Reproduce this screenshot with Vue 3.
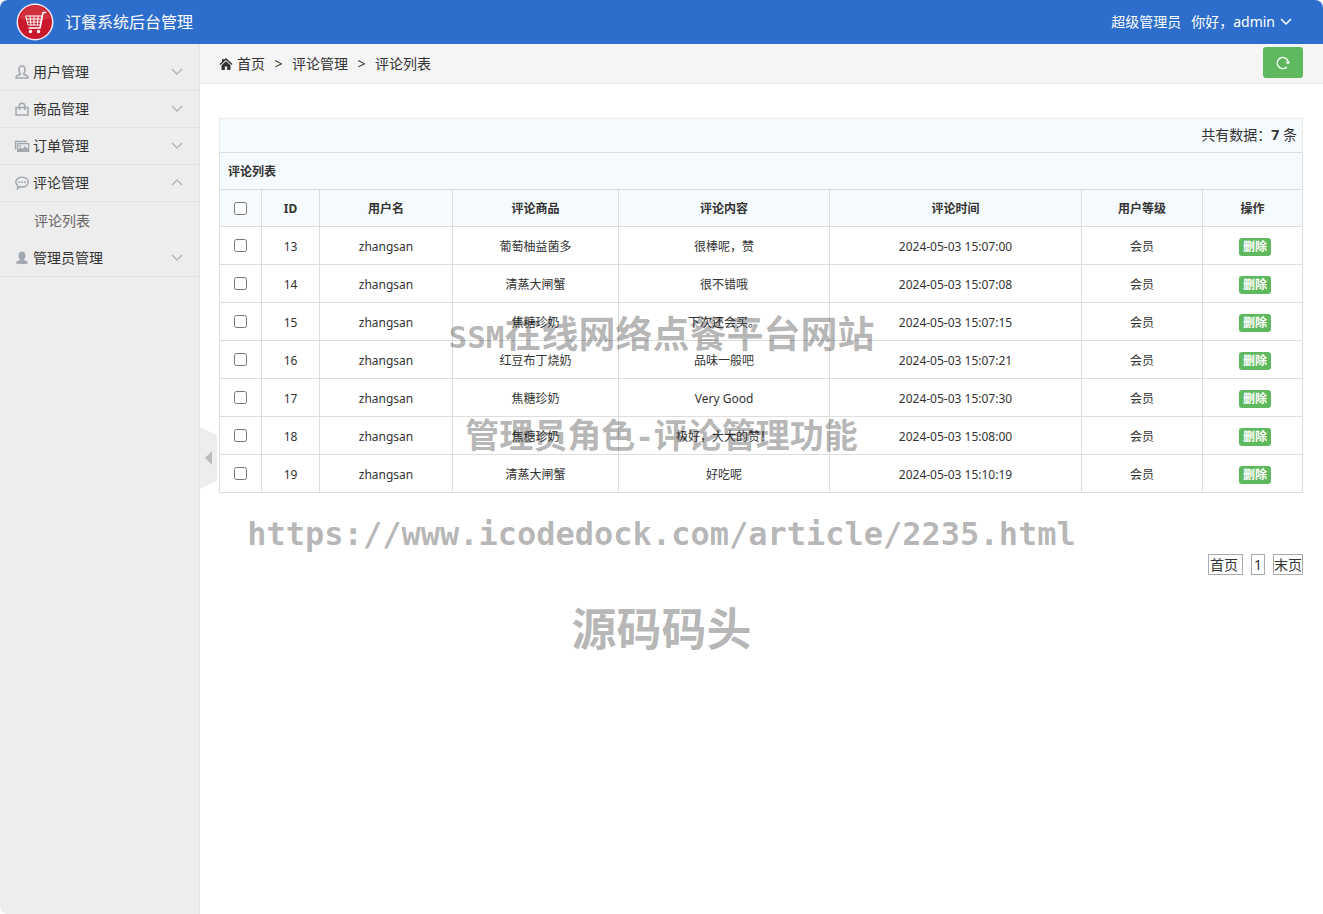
<script setup>
import { ref, computed } from 'vue'

const menu = [
  { label: '用户管理', icon: 'user' },
  { label: '商品管理', icon: 'bag' },
  { label: '订单管理', icon: 'picture' },
  { label: '评论管理', icon: 'chat', open: true, children: ['评论列表'] },
  { label: '管理员管理', icon: 'admin' },
]

const widths = [42, 58, 133, 166, 211, 252, 121, 100]
const headings = ['ID', '用户名', '评论商品', '评论内容', '评论时间', '用户等级', '操作']

const comments = [
  { id: 13, user: 'zhangsan', product: '葡萄柚益菌多', text: '很棒呢，赞', time: '2024-05-03 15:07:00' },
  { id: 14, user: 'zhangsan', product: '清蒸大闸蟹', text: '很不错哦', time: '2024-05-03 15:07:08' },
  { id: 15, user: 'zhangsan', product: '焦糖珍奶', text: '下次还会买。', time: '2024-05-03 15:07:15' },
  { id: 16, user: 'zhangsan', product: '红豆布丁烧奶', text: '品味一般吧', time: '2024-05-03 15:07:21' },
  { id: 17, user: 'zhangsan', product: '焦糖珍奶', text: 'Very Good', time: '2024-05-03 15:07:30' },
  { id: 18, user: 'zhangsan', product: '焦糖珍奶', text: '极好，大大的赞！', time: '2024-05-03 15:08:00' },
  { id: 19, user: 'zhangsan', product: '清蒸大闸蟹', text: '好吃呢', time: '2024-05-03 15:10:19' },
]

const selected = ref([])
const allSelected = computed({
  get: () => selected.value.length === comments.length,
  set: (on) => { selected.value = on ? comments.map((c) => c.id) : [] },
})
</script>

<template>
  <div class="page">
    <header class="topbar">
      <svg class="logo" viewBox="0 0 38 38" aria-hidden="true">
        <circle cx="19" cy="19" r="18.5" fill="#f3e9f0" />
        <circle cx="19" cy="19" r="17" fill="#c9182b" />
        <path d="M3.5 15a16 16 0 0 1 31 0Q19 22 3.5 15Z" fill="#d9404c" opacity=".6" />
        <g fill="none" stroke="#fff" stroke-linecap="round" stroke-linejoin="round">
          <path d="M29.500 9.500h-2.500l-3 15.500H13" stroke-width="1.500" />
          <path d="M10 13h16l-1.500 9H12.500zM10.500 16h15M11.500 19h13.500M14 13l1 9M18 13v9M22 13l-.5 9" stroke-width="1" />
        </g>
        <circle cx="14.500" cy="28.500" r="1.700" fill="#fff" />
        <circle cx="22.500" cy="28.500" r="1.700" fill="#fff" />
      </svg>
      <h1>订餐系统后台管理</h1>
      <div class="account">
        <span>超级管理员</span>
        <button type="button">你好，admin
          <svg width="12" height="8" viewBox="0 0 12 8" fill="none" stroke="currentColor" stroke-width="1.500" aria-hidden="true"><path d="M1 1l5 5 5-5" /></svg>
        </button>
      </div>
    </header>

    <div class="body">
      <aside class="sidebar">
        <nav>
          <template v-for="item in menu" :key="item.label">
            <button type="button" class="item" :aria-expanded="!!item.open">
              <svg class="glyph" viewBox="0 0 14 14" aria-hidden="true">
                <path v-if="item.icon === 'user'" d="M5.300 8.700C4 7.500 3.800 5.800 4 4c.2-2 1.400-3 3-3s2.800 1 3 3c.2 1.800 0 3.500-1.300 4.700v.9c2.500.5 4.300 1 4.300 3.300H1c0-2.300 1.800-2.800 4.300-3.300z" class="line" />
                <g v-else-if="item.icon === 'bag'" class="line">
                  <path d="M1 5.500h12v7.500H1zM4.300 8V4a2.700 2.700 0 0 1 5.400 0v4" />
                </g>
                <g v-else-if="item.icon === 'picture'">
                  <path d="M.6 10.500V2.600H12" class="line" />
                  <path fill-rule="evenodd" class="solid" d="M2 4h12.300v9H2zM3.200 5.200v5l2.300-2 1.800 1.600L10.200 7l2.800 3V5.200z" />
                  <circle cx="5" cy="6.700" r="1" class="solid" />
                </g>
                <g v-else-if="item.icon === 'chat'">
                  <path class="line" d="M7 1.200c3.500 0 6.200 2 6.200 4.900S10.500 11 7 11c-.8 0-1.500 0-2.200-.3L2.500 12.700l.3-2.900C1.600 9 .8 7.700.8 6.100.8 3.200 3.500 1.200 7 1.200z" />
                  <path class="solid" d="M3.300 5.300h1.700v1.700H3.300zM6.200 5.300h1.700v1.700H6.200zM9 5.300h1.700v1.700H9z" />
                </g>
                <path v-else class="solid" d="M5.300 8.700C3.700 7.300 3.400 5.500 3.600 3.700 3.800 1.600 5 .5 7 .5s3.200 1.100 3.400 3.200c.2 1.800-.1 3.600-1.700 5 .2 1 4.300.9 4.300 3.300 0 1.500-12 1.500-12 0 0-2.400 4.100-2.300 4.300-3.300z" />
              </svg>
              <span>{{ item.label }}</span>
              <svg class="chevron" viewBox="0 0 12 8" aria-hidden="true">
                <path :d="item.open ? 'M1 6l5-5 5 5' : 'M1 1l5 5 5-5'" />
              </svg>
            </button>
            <a v-for="child in item.children" :key="child" class="sub" href="#">{{ child }}</a>
          </template>
        </nav>
        <button type="button" class="fold" aria-label="收起菜单">
          <svg width="17" height="62" viewBox="0 0 17 62"><path d="M0 0l17 8v46l-17 8z" fill="#ededed" /><path d="M12 24v14l-7-7z" fill="#bbb" /></svg>
        </button>
      </aside>

      <main>
        <nav class="crumbs">
          <svg width="14" height="14" viewBox="0 0 14 14" fill="#333" aria-hidden="true">
            <path d="M7 1l6.500 6-1 1L7 3 1.500 8l-1-1L3 4.700V2h1.700v1.100z" />
            <path d="M7 4.200l4.500 4V13H8.200V9.500H5.800V13H2.500V8.200z" />
          </svg>
          <a href="#">首页</a>
          <span class="sep">&gt;</span>
          <span>评论管理</span>
          <span class="sep">&gt;</span>
          <span>评论列表</span>
          <button type="button" class="refresh" aria-label="刷新">
            <svg width="16" height="16" viewBox="0 0 16 16" fill="none" stroke="#fff" stroke-width="1.300" aria-hidden="true">
              <path d="M11.800 12A5.600 5.600 0 1 1 13.300 7" />
              <path d="M10.300 6.800h5l-2.400 2.600z" fill="#fff" stroke="none" />
            </svg>
          </button>
        </nav>

        <section class="content">
          <div class="count">共有数据：<strong>7</strong> 条</div>
          <table>
            <colgroup><col v-for="(w, i) in widths" :key="i" :style="{ width: w + 'px' }" /></colgroup>
            <thead>
              <tr><th colspan="8" class="caption">评论列表</th></tr>
              <tr>
                <th class="check"><input v-model="allSelected" type="checkbox" aria-label="全选" /></th>
                <th v-for="h in headings" :key="h">{{ h }}</th>
              </tr>
            </thead>
            <tbody>
              <tr v-for="c in comments" :key="c.id">
                <td class="check"><input v-model="selected" type="checkbox" :value="c.id" :aria-label="'选择 ' + c.id" /></td>
                <td>{{ c.id }}</td>
                <td>{{ c.user }}</td>
                <td>{{ c.product }}</td>
                <td>{{ c.text }}</td>
                <td>{{ c.time }}</td>
                <td>会员</td>
                <td class="action"><button type="button" class="delete">删除</button></td>
              </tr>
            </tbody>
          </table>
          <div class="pager">
            <a href="#" class="first">首页</a>
            <a href="#">1</a>
            <a href="#">末页</a>
          </div>
        </section>
      </main>
    </div>

    <div class="watermark">
      <p class="wm-title"><span>SSM</span>在线网络点餐平台网站</p>
      <p class="wm-role">管理员角色<span>-</span>评论管理功能</p>
      <p class="wm-url">https://www.icodedock.com/article/2235.html</p>
      <p class="wm-name">源码码头</p>
    </div>
  </div>
</template>

<style>
body { margin: 0; background: #fff; }
</style>

<style scoped>
.page {
  position: relative;
  display: flex;
  flex-direction: column;
  min-height: 100vh;
  overflow: hidden;
  border-radius: 8px;
  background: #fff;
  color: #333;
  font: 14px/20px "Noto Sans", "Noto Sans CJK SC", sans-serif;
}
button { font: inherit; color: inherit; border: 0; padding: 0; background: none; cursor: pointer; }
a { color: inherit; text-decoration: none; }

.topbar { display: flex; align-items: center; height: 44px; padding: 0 31px 0 16px; background: #2d6dcc; color: #fff; }
.logo { width: 38px; height: 38px; }
.topbar h1 { margin: 0 0 0 11px; font-size: 16px; font-weight: 400; line-height: 24px; }
.account { display: flex; gap: 10px; margin-left: auto; }
.account button { display: flex; align-items: center; gap: 5px; }

.body { display: flex; flex: 1; }
.sidebar { position: relative; flex: none; box-sizing: border-box; width: 200px; padding-top: 10px; background: #ededed; border-right: 1px solid #e2e2e2; }
.item { display: flex; align-items: center; width: 100%; height: 37px; padding: 0 16px 0 15px; border-bottom: 1px solid #e2e2e2; }
.glyph { width: 14px; height: 14px; margin-right: 4px; overflow: visible; }
.line { fill: none; stroke: #a2a8b0; stroke-width: 1.5; }
.solid { fill: #a2a8b0; }
.chevron { width: 12px; height: 8px; margin-left: auto; fill: none; stroke: #b2b2b2; stroke-width: 1.4; }
.sub { display: block; padding: 9px 0 9px 34px; color: #666; }
.fold { position: absolute; left: 200px; top: 383px; height: 62px; }
.fold svg { display: block; }

main { flex: 1; min-width: 0; }
.crumbs { display: flex; align-items: center; height: 39px; padding: 0 20px 0 19px; background: #f5f5f5; border-bottom: 1px solid #e5e5e5; }
.crumbs svg { margin-right: 4px; }
.sep { width: 27px; text-align: center; }
.refresh { display: flex; align-items: center; justify-content: center; width: 40px; height: 31px; margin: 0 0 2px auto; border-radius: 3px; background: #5eb95e; }
.refresh svg { margin: 0; }

.content { padding: 34px 20px 20px 19px; }
.count { padding: 6px 5px 7px; border: 1px solid #e8ebee; border-bottom: 0; background: #f5fafe; text-align: right; }
table { width: 100%; table-layout: fixed; border-collapse: separate; border-spacing: 0; border: 1px solid #ddd; border-width: 1px 0 0 1px; font-size: 12px; line-height: 18px; }
th, td { height: 35px; padding: 2px 0 0; border: 1px solid #ddd; border-width: 0 1px 1px 0; text-align: center; }
th { height: 34px; background: #f5fafe; }
.check { padding-top: 0; height: 37px; }
th.check { height: 36px; }
.caption { padding-left: 8px; text-align: left; }
input { display: block; width: 13px; height: 13px; margin: 0 auto; }
.action { padding-left: 5px; }
.delete { display: block; margin: 0 auto; padding: 0 4px; border-radius: 3px; background: #5eb95e; color: #fff; font-weight: 700; line-height: 18px; }
.pager { display: flex; justify-content: flex-end; gap: 8px; margin-top: 61px; }
.pager a { padding: 0 2px; border: 1px solid #aaa; line-height: 19px; }
.pager a:last-child { padding: 0; }
.pager .first { padding: 0 4px 0 1px; }

.watermark { position: absolute; top: 308px; left: 0; right: 0; color: rgba(0, 0, 0, 0.3); font-family: "DejaVu Sans Mono", "Noto Sans CJK SC", monospace; font-weight: 700; text-align: center; pointer-events: none; }
.watermark p { margin: 0 0 43px; white-space: nowrap; line-height: 56px; }
.watermark span { font-size: 31px; }
.watermark .wm-title { font-size: 37px; }
.watermark .wm-role { margin-bottom: 41px; font-size: 34px; }
.watermark .wm-url { margin-bottom: 41px; font-size: 32px; }
.watermark .wm-name { margin-bottom: 0; font-size: 45px; }
</style>
